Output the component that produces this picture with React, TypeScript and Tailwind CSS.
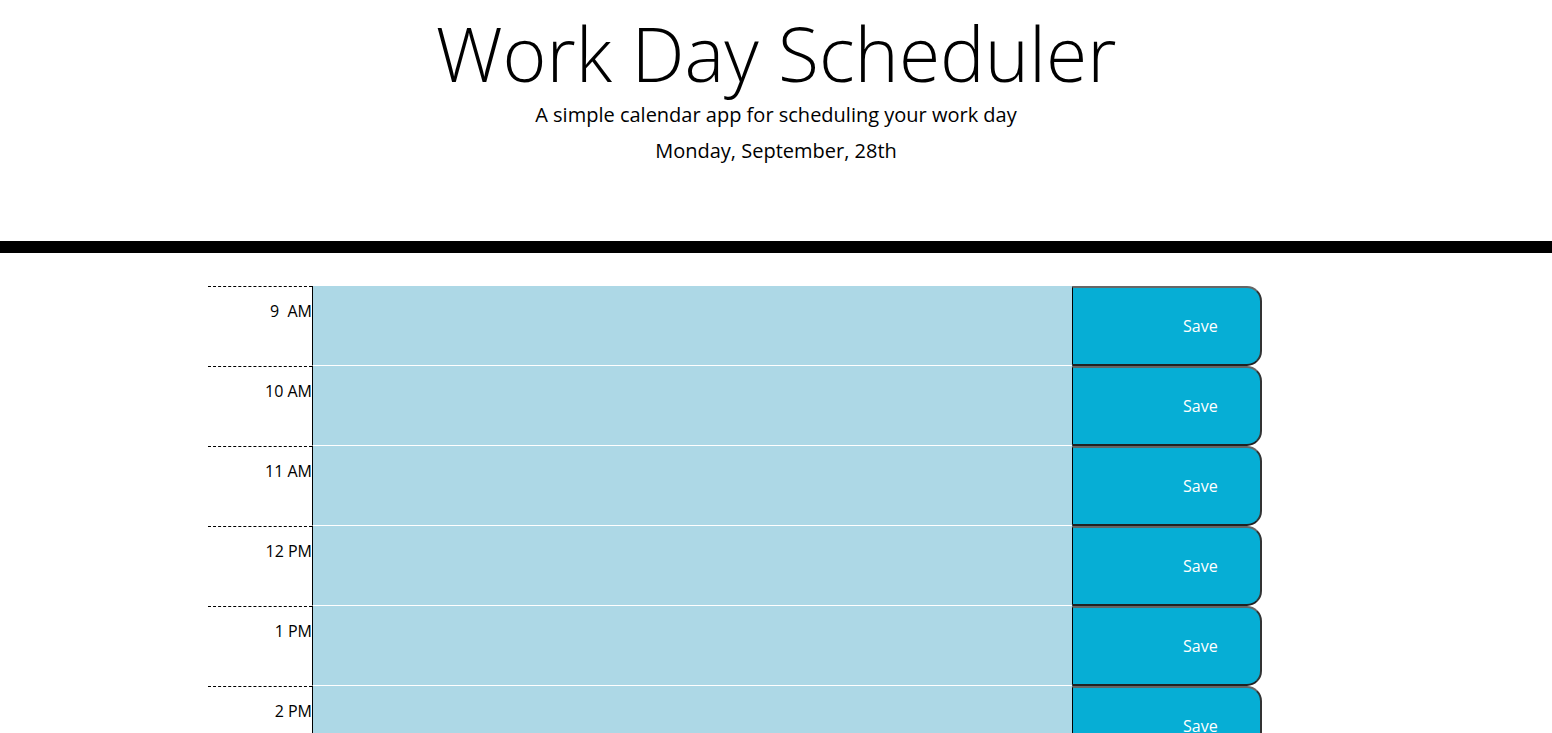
const HOURS = ["9\u00a0 AM", "10 AM", "11 AM", "12 PM", "1 PM", "2 PM", "3 PM", "4 PM", "5 PM"];

export default function App() {
  return (
    <div className="min-h-screen bg-white text-black" style={{ fontFamily: '"Open Sans", sans-serif' }}>
      <header className="border-b-[12px] border-black pt-[8px] pb-[75px] text-center">
        <h1 className="text-[75px] font-light leading-[1.2]">Work Day Scheduler</h1>
        <p className="text-[20px] leading-[1.5] mt-[2px]">A simple calendar app for scheduling your work day</p>
        <p className="text-[20px] leading-[1.5] mt-[6px]">Monday, September, 28th</p>
      </header>

      <main className="pt-[33px] pl-[208px]">
        {HOURS.map((hour) => (
          <div key={hour} className="flex h-[80px] w-[1054px]">
            <div className="w-[104px] shrink-0 border-t border-dashed border-black pt-[12px] text-right text-[16px] leading-[1.5]">
              {hour}
            </div>
            <textarea className="w-[760px] shrink-0 resize-none bg-[#add8e6] border-l border-l-black border-b border-b-white outline-none" />
            <button className="w-[190px] shrink-0 rounded-r-[15px] bg-[#06aed5] border-l border-l-black border-t-2 border-t-[#666] border-r-2 border-r-[#333] border-b-2 border-b-[#222] pl-[110px] text-left text-[16px] text-white">
              Save
            </button>
          </div>
        ))}
      </main>
    </div>
  );
}
